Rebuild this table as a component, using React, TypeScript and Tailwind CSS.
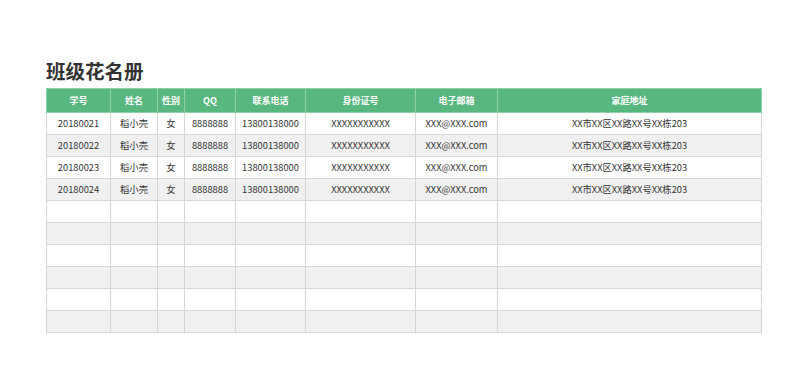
const COLS = [
  { label: "学号", w: "w-[64px]" },
  { label: "姓名", w: "w-[47px]" },
  { label: "性别", w: "w-[27px]" },
  { label: "QQ", w: "w-[51px]" },
  { label: "联系电话", w: "w-[70px]" },
  { label: "身份证号", w: "w-[110px]" },
  { label: "电子邮箱", w: "w-[82px]" },
  { label: "家庭地址", w: "w-[264px]" },
];

const students = ["20180021", "20180022", "20180023", "20180024"].map((id) => [
  id,
  "稻小壳",
  "女",
  "8888888",
  "13800138000",
  "XXXXXXXXXXX",
  "XXX@XXX.com",
  "XX市XX区XX路XX号XX栋203",
]);

// pad out to ten rows with blank lines
const rows: string[][] = [
  ...students,
  ...Array.from({ length: 6 }, () => COLS.map(() => "")),
];

export default function App() {
  return (
    <div
      className="w-[800px] h-[384px] bg-white pl-[46px] pt-[58px]"
      style={{ fontFamily: '"Noto Sans CJK SC", "Noto Sans", sans-serif' }}
    >
      <h1 className="text-[19.5px] leading-[26px] font-bold text-[#333] mb-[4px]">
        班级花名册
      </h1>
      <table className="border-collapse text-[9.3px] text-[#333]">
        <thead>
          <tr className="bg-[#58b77f] h-[24px]">
            {COLS.map((c) => (
              <th
                key={c.label}
                className={`${c.w} p-0 border border-[#8fcfa9] text-white font-bold text-center text-[9px]`}
              >
                {c.label}
              </th>
            ))}
          </tr>
        </thead>
        <tbody>
          {rows.map((r, i) => (
            <tr
              key={i}
              className={`h-[22px] ${i % 2 === 1 ? "bg-[#f0f0f0]" : "bg-white"}`}
            >
              {r.map((cell, j) => (
                <td
                  key={j}
                  className="p-0 border border-[#d6d6d6] text-center whitespace-nowrap"
                >
                  {cell}
                </td>
              ))}
            </tr>
          ))}
        </tbody>
      </table>
    </div>
  );
}
